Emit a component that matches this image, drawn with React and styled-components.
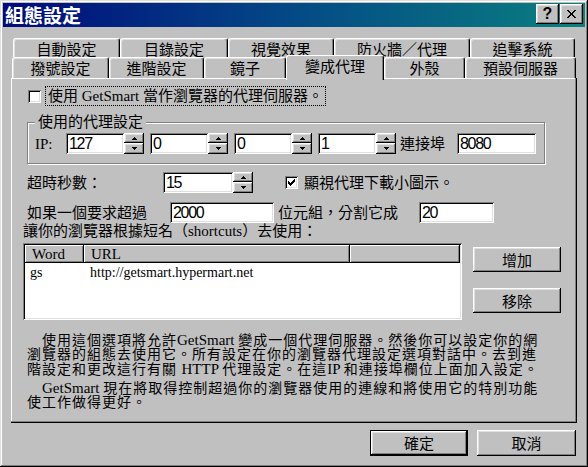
import React from 'react';
import styled, { createGlobalStyle, css } from 'styled-components';

const GlobalStyle = createGlobalStyle`
  html, body { margin: 0; padding: 0; background: #c0c0c0; }
  * { box-sizing: border-box; }
`;

const raised = css`
  box-shadow: inset -1px -1px #000, inset 1px 1px #fff, inset -2px -2px #808080, inset 2px 2px #dfdfdf;
`;
const sunken = css`
  box-shadow: inset 1px 1px #808080, inset -1px -1px #fff, inset 2px 2px #000, inset -2px -2px #dfdfdf;
`;

const Window = styled.div`
  width: 588px;
  height: 467px;
  padding: 3px;
  background: #c0c0c0;
  box-shadow: inset -1px -1px #000, inset 1px 1px #dfdfdf, inset -2px -2px #808080, inset 2px 2px #fff;
  display: flex;
  flex-direction: column;
  font-family: "Liberation Serif", "Noto Sans CJK TC", serif;
  font-size: 15px;
  line-height: 18px;
  color: #000;
`;

const TitleBar = styled.div`
  height: 24px;
  flex: none;
  display: flex;
  align-items: center;
  justify-content: space-between;
  padding: 0 2px;
  background: linear-gradient(90deg, #000a7c 0%, #044a86 50%, #0a8080 100%);
`;

const TitleText = styled.div`
  color: #fff;
  font-family: "Noto Sans CJK TC", sans-serif;
  font-weight: 700;
  font-size: 19px;
  line-height: 22px;
`;

const TitleButtons = styled.div`
  display: flex;
  gap: 1px;
  align-self: flex-start;
  margin-top: 1px;
`;

const TitleButton = styled.div`
  width: 23px;
  height: 20px;
  background: #c0c0c0;
  ${raised};
  display: flex;
  align-items: center;
  justify-content: center;
  font-family: "Liberation Sans", sans-serif;
  font-weight: 700;
  font-size: 16px;
  line-height: 16px;
`;

const Body = styled.div`
  flex: 1;
  display: flex;
  flex-direction: column;
  padding: 11px 8px 0 8px;
`;

const TabRow = styled.div`
  display: flex;
  height: ${p => p.$h}px;
  margin-left: ${p => p.$offset}px;
`;

const Tab = styled.div`
  flex: none;
  width: ${p => p.$w}px;
  height: ${p => p.$h}px;
  padding-top: ${p => p.$pt}px;
  display: flex;
  justify-content: center;
  background: #c0c0c0;
  border-top: 1px solid #fff;
  border-left: 1px solid #fff;
  border-right: 1px solid #000;
  border-radius: 3px 3px 0 0;
  box-shadow: inset -1px 0 #808080, inset 1px 1px #dfdfdf;
  font-family: "Noto Sans CJK TC", sans-serif;
  font-size: 15px;
  line-height: 15px;
  white-space: nowrap;
  ${p => p.$selected && css`
    position: relative;
    z-index: 1;
    margin-top: -2px;
    height: ${p.$h + 4}px;
    box-shadow: inset -1px 0 #808080;
  `}
`;

const Panel = styled.div`
  width: 566px;
  height: 345px;
  flex: none;
  padding: 8px 0 0 16px;
  background: #c0c0c0;
  box-shadow: inset -1px -1px #000, inset -2px -2px #808080, inset 1px 1px #fff;
  display: flex;
  flex-direction: column;
  align-items: flex-start;
`;

const CheckRow = styled.div`
  display: flex;
  align-items: center;
  height: 20px;
  margin-left: ${p => p.$ml || 0}px;
`;

const CheckBox = styled.span`
  width: 13px;
  height: 13px;
  flex: none;
  background: #fff;
  ${sunken};
  display: flex;
  align-items: center;
  justify-content: center;
`;

const FocusLabel = styled.span`
  margin-left: 4px;
  padding: 0 2px;
  height: 20px;
  line-height: 18px;
  border: 1px dotted #000;
  white-space: nowrap;
`;

const PlainLabel = styled.span`
  margin-left: ${p => p.$ml || 6}px;
  white-space: nowrap;
`;

const GroupBox = styled.fieldset`
  margin: 7px 0 0 0;
  width: 518px;
  padding: 2px 8px 9px 7px;
  border: 1px solid #808080;
  box-shadow: 1px 1px #fff, inset 1px 1px #fff;
  min-inline-size: 0;
`;

const Legend = styled.legend`
  padding: 0 3px;
  margin-left: 0;
  background: #c0c0c0;
  line-height: 18px;
  white-space: nowrap;
`;

const Row = styled.div`
  display: flex;
  align-items: center;
  height: ${p => p.$h || 21}px;
  margin-top: ${p => p.$mt || 0}px;
  margin-left: ${p => p.$ml || 0}px;
`;

const Label = styled.span`
  flex: none;
  width: ${p => (p.$w ? `${p.$w}px` : 'auto')};
  margin-left: ${p => p.$ml || 0}px;
  white-space: nowrap;
`;

const Edit = styled.div`
  flex: none;
  width: ${p => p.$w}px;
  height: 21px;
  background: #fff;
  ${sunken};
  padding: 2px 0 0 3px;
  font-family: "Liberation Sans", sans-serif;
  font-size: 16px;
  letter-spacing: -1.3px;
  line-height: 17px;
  margin-left: ${p => p.$ml || 0}px;
`;

const Spin = styled.div`
  flex: none;
  width: 20px;
  height: 21px;
  display: flex;
  flex-direction: column;
`;

const SpinButton = styled.div`
  height: ${p => p.$h}px;
  background: #c0c0c0;
  ${raised};
  display: flex;
  align-items: center;
  justify-content: center;
`;

const SpinGroup = styled.div`
  display: flex;
  margin-left: ${p => p.$ml || 0}px;
`;

const ListArea = styled.div`
  display: flex;
  margin-top: ${p => p.$mt || 0}px;
  margin-left: -4px;
`;

const ListView = styled.div`
  width: 439px;
  height: 77px;
  background: #fff;
  padding: 2px;
  ${sunken};
  display: flex;
  flex-direction: column;
  font-size: 14px;
`;

const HeaderRow = styled.div`
  display: flex;
  height: 18px;
  flex: none;
`;

const HeaderCell = styled.div`
  width: ${p => (p.$w ? `${p.$w}px` : 'auto')};
  flex: ${p => (p.$w ? 'none' : '1')};
  background: #c0c0c0;
  box-shadow: inset -1px -1px #000, inset 1px 1px #fff, inset -2px -2px #808080;
  padding-left: 7px;
  font-size: 15px;
  line-height: 18px;
  white-space: nowrap;
`;

const DataRow = styled.div`
  display: flex;
  height: 18px;
  margin-top: 1px;
  line-height: 18px;
`;

const DataCell = styled.div`
  width: ${p => p.$w}px;
  flex: none;
  padding-left: ${p => p.$pl}px;
  white-space: nowrap;
`;

const SideButtons = styled.div`
  display: flex;
  flex-direction: column;
  gap: 16px;
  margin-left: 11px;
  padding-top: 4px;
`;

const Button = styled.div`
  width: ${p => p.$w}px;
  height: ${p => p.$h}px;
  flex: none;
  background: #c0c0c0;
  ${raised};
  display: flex;
  align-items: center;
  justify-content: center;
  font-family: "Noto Sans CJK TC", sans-serif;
  font-size: 15px;
  line-height: 16px;
  ${p => p.$default && css`
    box-shadow: inset 0 0 0 1px #000, inset -2px -2px #000, inset 2px 2px #fff, inset -3px -3px #808080, inset 3px 3px #dfdfdf;
  `}
`;

const Description = styled.div`
  margin-top: 13px;
  font-size: 14px;
  letter-spacing: 1px;
`;

const Para = styled.div`
  & + & { margin-top: 4px; }
  line-height: 14px;
`;

const Line = styled.div`
  white-space: nowrap;
  padding-left: ${p => (p.$indent ? 15 : 0)}px;
`;

const Latin = styled.span`
  font-size: 15px;
  letter-spacing: 0;
`;

const Footer = styled.div`
  display: flex;
  justify-content: flex-end;
  gap: 9px;
  margin-top: 7px;
  margin-right: 1px;
`;

const UpArrow = () => (
  <svg width="5" height="3" viewBox="0 0 5 3" shapeRendering="crispEdges">
    <path d="M2 0h1v1h1v1h1v1H0V2h1V1h1z" fill="#000" />
  </svg>
);
const DownArrow = () => (
  <svg width="5" height="3" viewBox="0 0 5 3" shapeRendering="crispEdges">
    <path d="M0 0h5v1H4v1H3v1H2V2H1V1H0z" fill="#000" />
  </svg>
);

const SpinBox = ({ value, w, ml }) => (
  <SpinGroup $ml={ml}>
    <Edit $w={w}>{value}</Edit>
    <Spin>
      <SpinButton $h={10}><UpArrow /></SpinButton>
      <SpinButton $h={11}><DownArrow /></SpinButton>
    </Spin>
  </SpinGroup>
);

const CheckMark = () => (
  <svg width="7" height="7" viewBox="0 0 7 7" shapeRendering="crispEdges">
    <path d="M6 0h1v3H6v1H5v1H4v1H3v1H2V6H1V5H0V2h1v1h1v1h1V3h1V2h1V1h1z" fill="#000" />
  </svg>
);

const CloseIcon = () => (
  <svg width="9" height="8" viewBox="0 0 9 8" shapeRendering="crispEdges">
    <path d="M0 0h2v1h1v1h1v1h1V2h1V1h1V0h2v1H8v1H7v1H6v2h1v1h1v1h1v1H7V7H6V6H5V5H4v1H3v1H2v1H0V7h1V6h1V5h1V3H2V2H1V1H0z" fill="#000" />
  </svg>
);

const row1 = [
  ['自動設定', 107],
  ['目錄設定', 108],
  ['視覺效果', 106],
  ['防火牆／代理', 136],
  ['追擊系統', 105],
];
const row2 = [
  ['撥號設定', 97],
  ['進階設定', 95],
  ['鏡子', 82],
  ['變成代理', 98, true],
  ['外殼', 81],
  ['預設伺服器', 111],
];

export default function App() {
  return (
    <>
      <GlobalStyle />
      <Window>
        <TitleBar>
          <TitleText>組態設定</TitleText>
          <TitleButtons>
            <TitleButton>?</TitleButton>
            <TitleButton><CloseIcon /></TitleButton>
          </TitleButtons>
        </TitleBar>
        <Body>
          <TabRow $h={19} $offset={2}>
            {row1.map(([t, w]) => (
              <Tab key={t} $w={w} $h={19} $pt={2}>{t}</Tab>
            ))}
          </TabRow>
          <TabRow $h={21} $offset={1}>
            {row2.map(([t, w, sel]) => (
              <Tab key={t} $w={w} $h={21} $pt={2} $selected={sel}>{t}</Tab>
            ))}
          </TabRow>
          <Panel>
            <CheckRow $ml={1}>
              <CheckBox />
              <FocusLabel>使用 GetSmart 當作瀏覽器的代理伺服器。</FocusLabel>
            </CheckRow>

            <GroupBox>
              <Legend>使用的代理設定</Legend>
              <Row>
                <Label $w={31}>IP:</Label>
                <SpinBox value="127" w={58} />
                <SpinBox value="0" w={58} ml={6} />
                <SpinBox value="0" w={58} ml={6} />
                <SpinBox value="1" w={58} ml={6} />
                <Label $w={57} $ml={4}>連接埠</Label>
                <Edit $w={79}>8080</Edit>
              </Row>
            </GroupBox>

            <Row $mt={8}>
              <Label $w={136}>超時秒數：</Label>
              <SpinBox value="15" w={70} />
              <CheckRow $ml={32}>
                <CheckBox><CheckMark /></CheckBox>
                <PlainLabel $ml={6}>顯視代理下載小圖示。</PlainLabel>
              </CheckRow>
            </Row>

            <Row $mt={9}>
              <Label $w={143}>如果一個要求超過</Label>
              <Edit $w={104}>2000</Edit>
              <Label $w={141} $ml={4}>位元組，分割它成</Label>
              <Edit $w={75}>20</Edit>
            </Row>

            <Row $h={18} $mt={-1} $ml={-4}>
              <Label>讓你的瀏覽器根據短名（shortcuts）去使用：</Label>
            </Row>

            <ListArea $mt={3}>
              <ListView>
                <HeaderRow>
                  <HeaderCell $w={59}>Word</HeaderCell>
                  <HeaderCell $w={266}>URL</HeaderCell>
                  <HeaderCell />
                </HeaderRow>
                <DataRow>
                  <DataCell $w={59} $pl={5}>gs</DataCell>
                  <DataCell $w={300} $pl={6}>http://getsmart.hypermart.net</DataCell>
                </DataRow>
              </ListView>
              <SideButtons>
                <Button $w={88} $h={25}>增加</Button>
                <Button $w={88} $h={25}>移除</Button>
              </SideButtons>
            </ListArea>

            <Description>
              <Para>
                <Line $indent>使用這個選項將允許<Latin>GetSmart </Latin>變成一個代理伺服器。然後你可以設定你的網</Line>
                <Line>瀏覽器的組態去使用它。所有設定在你的瀏覽器代理設定選項對話中。去到進</Line>
                <Line>階設定和更改這行有關 <Latin>HTTP </Latin>代理設定。在這<Latin>IP </Latin>和連接埠欄位上面加入設定。</Line>
              </Para>
              <Para>
                <Line $indent><Latin>GetSmart </Latin>現在將取得控制超過你的瀏覽器使用的連線和將使用它的特別功能</Line>
                <Line>使工作做得更好。</Line>
              </Para>
            </Description>
          </Panel>
          <Footer>
            <Button $w={98} $h={26} $default>確定</Button>
            <Button $w={99} $h={26}>取消</Button>
          </Footer>
        </Body>
      </Window>
    </>
  );
}
